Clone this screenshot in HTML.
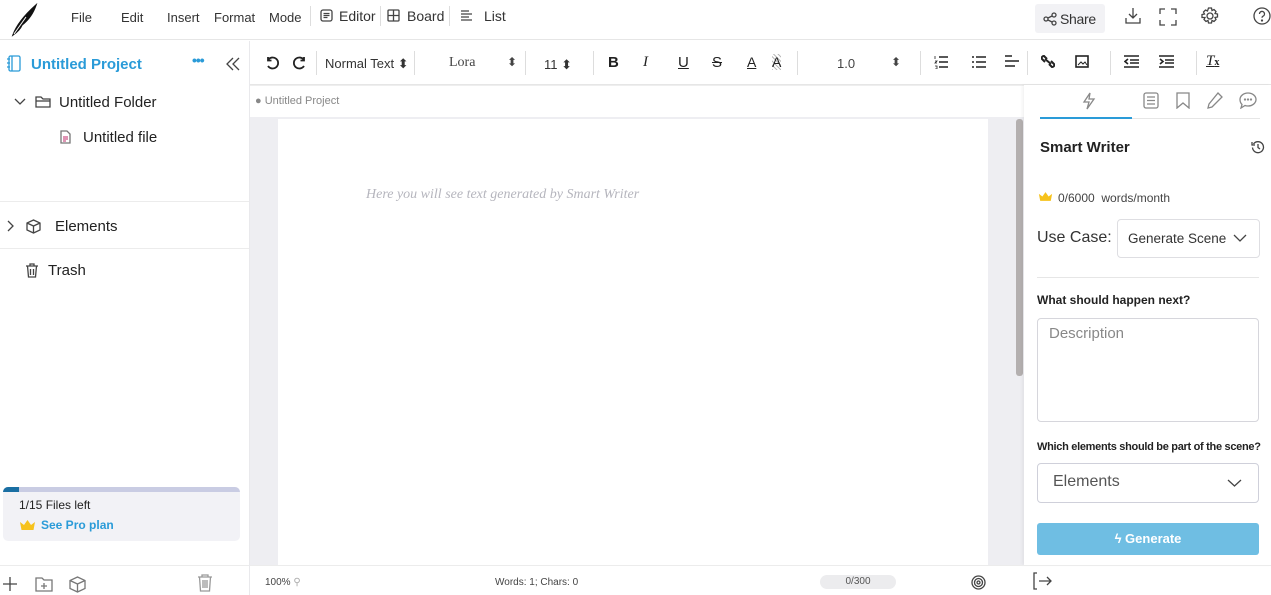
<!DOCTYPE html>
<html><head><meta charset="utf-8"><style>
*{box-sizing:border-box;margin:0;padding:0}
body{width:1271px;height:595px;overflow:hidden;background:#fff;font-family:"Liberation Sans",sans-serif;color:#222;position:relative}
.a{position:absolute}
svg{position:absolute;fill:none;stroke:#444;stroke-width:1.3}
.m{font-size:13px;color:#333;top:10px}
.tb{font-size:14px;color:#333}
</style></head><body>
<div class="a" style="left:0;top:0;width:1271px;height:40px;border-bottom:1px solid #e6e6e6"></div>
<svg style="left:10px;top:3px" width="30" height="34" viewBox="0 0 30 34"><path d="M3 32 Q8 18 26 2 Q22 14 12 22 Q10 27 3 32Z" fill="#111" stroke="#111"/><path d="M4 31 L16 14" stroke="#fff" stroke-width="1"/></svg>
<div class="a m" style="left:71px">File</div>
<div class="a m" style="left:121px">Edit</div>
<div class="a m" style="left:167px">Insert</div>
<div class="a m" style="left:214px">Format</div>
<div class="a m" style="left:269px">Mode</div>
<div class="a" style="left:310px;top:6px;width:1px;height:20px;background:#ddd"></div>
<svg style="left:320px;top:9px" width="13" height="13" viewBox="0 0 13 13"><rect x="1" y="1" width="11" height="11" rx="2"/><path d="M3.5 4.5h6M3.5 6.5h6M3.5 8.5h4"/></svg>
<div class="a tb" style="left:339px;top:8px">Editor</div>
<div class="a" style="left:380px;top:6px;width:1px;height:20px;background:#ddd"></div>
<svg style="left:387px;top:9px" width="13" height="13" viewBox="0 0 13 13"><rect x="1" y="1" width="11" height="11" rx="1"/><path d="M6.5 1v11M1 6.5h11"/></svg>
<div class="a tb" style="left:407px;top:8px">Board</div>
<div class="a" style="left:449px;top:6px;width:1px;height:20px;background:#ddd"></div>
<svg style="left:460px;top:10px" width="13" height="11" viewBox="0 0 13 11"><path d="M1 1h8M1 4h11M1 7h8M1 10h11"/></svg>
<div class="a tb" style="left:484px;top:8px">List</div>
<div class="a" style="left:1035px;top:4px;width:70px;height:29px;background:#f2f2f5;border-radius:3px"></div>
<svg style="left:1043px;top:12px" width="14" height="14" viewBox="0 0 14 14"><circle cx="3" cy="7" r="2"/><circle cx="11" cy="3" r="2"/><circle cx="11" cy="11" r="2"/><path d="M5 6l4-2M5 8l4 2"/></svg>
<div class="a" style="left:1060px;top:11px;font-size:14px;color:#333;letter-spacing:-0.3px">Share</div>
<svg style="left:1124px;top:7px" width="18" height="18" viewBox="0 0 18 18"><path d="M9 1v10M5 7l4 4 4-4M2 11v5h14v-5"/></svg>
<svg style="left:1159px;top:8px" width="18" height="18" viewBox="0 0 18 18"><path d="M1 6V1h5M12 1h5v5M17 12v5h-5M6 17H1v-5"/></svg>
<svg style="left:1201px;top:7px" width="18" height="18" viewBox="0 0 18 18"><circle cx="9" cy="9" r="3"/><path d="M7.5 1h3l.5 2.5 2-1 2 2-1 2 2.5.5v3l-2.5.5 1 2-2 2-2-1-.5 2.5h-3l-.5-2.5-2 1-2-2 1-2L1 10.5v-3L3.5 7l-1-2 2-2 2 1z"/></svg>
<svg style="left:1253px;top:7px" width="18" height="18" viewBox="0 0 18 18"><circle cx="9" cy="9" r="8"/><path d="M6.5 7a2.5 2.5 0 1 1 3.5 2.2c-.7.4-1 .8-1 1.6"/><circle cx="9" cy="13.5" r=".5" fill="#444"/></svg>

<div class="a" style="left:249px;top:41px;width:1px;height:554px;background:#e9e9ec"></div>
<svg style="left:7px;top:55px;stroke:#2a9bd8" width="14" height="17" viewBox="0 0 14 17"><rect x="2" y="1" width="11" height="15" rx="1.5"/><path d="M5 1v15M0 4h3M0 8h3M0 12h3"/></svg>
<div class="a" style="left:31px;top:56px;font-size:15px;font-weight:bold;color:#2a9bd8">Untitled Project</div>
<div class="a" style="left:192px;top:52px;font-size:14px;font-weight:bold;color:#2a9bd8;letter-spacing:-1px">•••</div>
<svg style="left:225px;top:57px" width="16" height="14" viewBox="0 0 16 14"><path d="M8 1L2 7l6 6M14 1L8 7l6 6"/></svg>
<svg style="left:14px;top:98px" width="12" height="8" viewBox="0 0 12 8"><path d="M1 1l5 5 5-5"/></svg>
<svg style="left:35px;top:95px" width="16" height="13" viewBox="0 0 16 13"><path d="M1 2h5l2 2h7v8H1z"/><path d="M1 6h14"/></svg>
<div class="a" style="left:59px;top:94px;font-size:15px;color:#222">Untitled Folder</div>
<svg style="left:60px;top:130px;stroke:#777" width="11" height="14" viewBox="0 0 11 14"><path d="M1 1h6l3 3v9H1z"/><path d="M3 7h5M3 9h5M3 11h3" stroke="#c58"/></svg>
<div class="a" style="left:83px;top:129px;font-size:15px;color:#222">Untitled file</div>
<div class="a" style="left:0;top:201px;width:249px;height:1px;background:#ececec"></div>
<div class="a" style="left:0;top:248px;width:249px;height:1px;background:#ececec"></div>
<svg style="left:7px;top:220px" width="7" height="12" viewBox="0 0 7 12"><path d="M1 1l5 5-5 5"/></svg>
<svg style="left:26px;top:219px" width="15" height="15" viewBox="0 0 15 15"><path d="M7.5 1L14 4v7l-6.5 3L1 11V4zM1 4l6.5 3L14 4M7.5 7v7"/></svg>
<div class="a" style="left:55px;top:218px;font-size:15px;color:#222">Elements</div>
<svg style="left:25px;top:263px" width="14" height="15" viewBox="0 0 14 15"><path d="M1 3h12M5 3V1h4v2M2.5 3l1 11h7l1-11M5.5 6v6M8.5 6v6"/></svg>
<div class="a" style="left:48px;top:262px;font-size:15px;color:#222">Trash</div>
<div class="a" style="left:3px;top:487px;width:237px;height:54px;background:#f2f2f6;border-radius:5px;overflow:hidden">
<div style="height:5px;background:#c9cce3"><div style="width:16px;height:5px;background:#1a6fa3"></div></div></div>
<div class="a" style="left:19px;top:498px;font-size:12px;color:#222">1/15 Files left</div>
<svg style="left:19px;top:519px;stroke:none" width="17" height="12" viewBox="0 0 17 12"><path d="M1 3l4 3 3.5-5 3.5 5 4-3-1.5 8h-12z" fill="#f6c21c"/></svg>
<div class="a" style="left:41px;top:518px;font-size:12px;font-weight:bold;color:#2a9bd8">See Pro plan</div>
<div class="a" style="left:0;top:565px;width:249px;height:1px;background:#ececec"></div>
<svg style="left:2px;top:576px" width="16" height="16" viewBox="0 0 16 16"><path d="M8 1v14M1 8h14"/></svg>
<svg style="left:35px;top:576px;stroke:#777" width="18" height="16" viewBox="0 0 18 16"><path d="M1 2h6l2 2h8v11H1z M9 7v6M6 10h6"/></svg>
<svg style="left:69px;top:576px;stroke:#777" width="17" height="17" viewBox="0 0 17 17"><path d="M8.5 1L16 4.5v8L8.5 16 1 12.5v-8zM1 4.5l7.5 3.5L16 4.5M8.5 8v8"/></svg>
<svg style="left:197px;top:574px;stroke:#999" width="16" height="18" viewBox="0 0 16 18"><path d="M1 3h14M5 3V1h6v2M2.5 3l1 14h9l1-14M6 6v8M8 6v8M10 6v8"/></svg>

<div class="a" style="left:250px;top:84px;width:1021px;height:1px;background:#e6e6e6"></div>
<svg style="left:265px;top:56px;stroke:#222;stroke-width:1.8" width="15" height="14" viewBox="0 0 15 14"><path d="M3 4a5.5 5.5 0 1 1 0 6M3 1v3.5h3.5"/></svg>
<svg style="left:292px;top:56px;stroke:#222;stroke-width:1.8" width="15" height="14" viewBox="0 0 15 14"><path d="M12 4a5.5 5.5 0 1 0 0 6M12 1v3.5H8.5"/></svg>
<div class="a" style="left:316px;top:51px;width:1px;height:24px;background:#ddd"></div>
<div class="a" style="left:325px;top:56px;font-size:13px;color:#333">Normal Text ⬍</div>
<div class="a" style="left:414px;top:51px;width:1px;height:24px;background:#ddd"></div>
<div class="a" style="left:449px;top:55px;font-size:14px;color:#444;font-family:'Liberation Serif',serif">Lora</div>
<div class="a" style="left:507px;top:55px;font-size:12px;color:#444">⬍</div>
<div class="a" style="left:525px;top:51px;width:1px;height:24px;background:#ddd"></div>
<div class="a" style="left:544px;top:57px;font-size:13px;color:#333">11 ⬍</div>
<div class="a" style="left:593px;top:51px;width:1px;height:24px;background:#ddd"></div>
<div class="a" style="left:608px;top:54px;font-size:15px;font-weight:bold;color:#222">B</div>
<div class="a" style="left:643px;top:54px;font-size:15px;font-style:italic;font-family:'Liberation Serif',serif;color:#222">I</div>
<div class="a" style="left:678px;top:54px;font-size:15px;text-decoration:underline;color:#222">U</div>
<div class="a" style="left:712px;top:54px;font-size:15px;text-decoration:line-through;color:#222">S</div>
<div class="a" style="left:747px;top:54px;font-size:14px;text-decoration:underline;color:#222">A</div>
<div class="a" style="left:772px;top:54px;font-size:14px;color:#222;background:repeating-linear-gradient(45deg,#bbb 0 1px,#fff 1px 3px)">A</div>
<div class="a" style="left:797px;top:51px;width:1px;height:24px;background:#ddd"></div>
<div class="a" style="left:837px;top:56px;font-size:13px;color:#444">1.0</div>
<div class="a" style="left:891px;top:55px;font-size:12px;color:#444">⬍</div>
<div class="a" style="left:920px;top:51px;width:1px;height:24px;background:#ddd"></div>
<svg style="left:934px;top:55px;stroke:#222;stroke-width:1.6" width="14" height="14" viewBox="0 0 14 14"><path d="M5 2h9M5 7h9M5 12h9"/><path d="M1 1v3M1 6h2l-2 2h2M1 11h2v3H1" stroke-width="0.8"/></svg>
<svg style="left:972px;top:55px;stroke:#222;stroke-width:1.6" width="14" height="14" viewBox="0 0 14 14"><path d="M4 2h10M4 7h10M4 12h10M0 2h2M0 7h2M0 12h2"/></svg>
<svg style="left:1005px;top:54px;stroke:#222;stroke-width:1.6" width="15" height="15" viewBox="0 0 15 15"><path d="M0 2h7M0 7h14M0 12h10"/></svg>
<div class="a" style="left:1027px;top:51px;width:1px;height:24px;background:#ddd"></div>
<svg style="left:1041px;top:54px;stroke:#222;stroke-width:2" width="14" height="15" viewBox="0 0 14 15"><path d="M6 5L3 2a2 2 0 0 0-2 3l3 3M8 10l3 3a2 2 0 0 0 2-3l-3-3M4 5l6 5"/></svg>
<svg style="left:1075px;top:55px;stroke:#222;stroke-width:1.6" width="14" height="13" viewBox="0 0 14 13"><rect x="1" y="1" width="12" height="11"/><path d="M3 10l3-3 2 2 2-2 2 3" stroke-width="1"/></svg>
<div class="a" style="left:1110px;top:51px;width:1px;height:24px;background:#ddd"></div>
<svg style="left:1124px;top:55px;stroke:#222;stroke-width:1.6" width="15" height="13" viewBox="0 0 15 13"><path d="M0 1h15M6 5h9M6 8h9M0 12h15M4 4L1 6.5 4 9"/></svg>
<svg style="left:1159px;top:55px;stroke:#222;stroke-width:1.6" width="15" height="13" viewBox="0 0 15 13"><path d="M0 1h15M6 5h9M6 8h9M0 12h15M1 4l3 2.5L1 9"/></svg>
<div class="a" style="left:1196px;top:51px;width:1px;height:24px;background:#ddd"></div>
<div class="a" style="left:1206px;top:53px;font-size:15px;font-style:italic;text-decoration:underline;color:#222;font-family:'Liberation Serif',serif">T<span style="font-size:10px;font-weight:bold;font-style:normal">x</span></div>

<div class="a" style="left:250px;top:85px;width:774px;height:1px;background:#eee"></div>
<div class="a" style="left:255px;top:95px;font-size:11px;color:#888">● Untitled Project</div>
<div class="a" style="left:250px;top:117px;width:774px;height:448px;background:#eeeef2"></div>
<div class="a" style="left:278px;top:119px;width:710px;height:446px;background:#fff"></div>
<div class="a" style="left:1016px;top:119px;width:7px;height:257px;background:#b4b0b0;border-radius:3px"></div>
<div class="a" style="left:366px;top:187px;font-size:14px;font-style:italic;color:#b5b5bd;font-family:'Liberation Serif',serif">Here you will see text generated by Smart Writer</div>

<div class="a" style="left:1024px;top:85px;width:247px;height:480px;background:#fff;box-shadow:-2px 0 3px rgba(0,0,0,.05)"></div>
<svg style="left:1082px;top:92px;stroke:#888" width="14" height="18" viewBox="0 0 14 18"><path d="M8 1L2 10h5l-2 7 7-10H7z"/></svg>
<div class="a" style="left:1040px;top:117px;width:92px;height:2px;background:#2a9bd8"></div>
<div class="a" style="left:1132px;top:118px;width:128px;height:1px;background:#e6e6e6"></div>
<svg style="left:1143px;top:92px;stroke:#888" width="16" height="17" viewBox="0 0 16 17"><rect x="1" y="1" width="14" height="15" rx="2"/><path d="M4 5h8M4 8.5h8M4 12h8"/></svg>
<svg style="left:1176px;top:92px;stroke:#888" width="14" height="17" viewBox="0 0 14 17"><path d="M1 1h12v15l-6-5-6 5z"/></svg>
<svg style="left:1207px;top:92px;stroke:#888" width="16" height="17" viewBox="0 0 16 17"><path d="M11 1l4 4L5 15l-4 1 1-4z"/></svg>
<svg style="left:1239px;top:92px;stroke:#888" width="18" height="17" viewBox="0 0 18 17"><path d="M9 1c4.5 0 8 3 8 6.5S13.5 14 9 14c-1 0-2 0-3-.5L2 16l1-3.5C1.5 11 1 9.5 1 7.5 1 4 4.5 1 9 1z"/><circle cx="6" cy="7.5" r=".5"/><circle cx="9" cy="7.5" r=".5"/><circle cx="12" cy="7.5" r=".5"/></svg>
<div class="a" style="left:1040px;top:139px;font-size:15px;font-weight:bold;color:#222">Smart Writer</div>
<svg style="left:1251px;top:140px" width="14" height="14" viewBox="0 0 14 14"><path d="M2.5 4A5.5 5.5 0 1 1 1.5 7.5M1 2v3h3M7 4v3.5l2 1.5"/></svg>
<svg style="left:1038px;top:191px;stroke:none" width="15" height="11" viewBox="0 0 17 12"><path d="M1 3l4 3 3.5-5 3.5 5 4-3-1.5 8h-12z" fill="#f6c21c"/></svg>
<div class="a" style="left:1058px;top:191px;font-size:12px;color:#444">0/6000 &nbsp;words/month</div>
<div class="a" style="left:1037px;top:229px;font-size:16px;color:#333">Use Case:</div>
<div class="a" style="left:1117px;top:219px;width:143px;height:39px;border:1px solid #dedee2;border-radius:4px"></div>
<div class="a" style="left:1128px;top:231px;font-size:13.5px;color:#333">Generate Scene</div>
<svg style="left:1233px;top:234px" width="14" height="8" viewBox="0 0 14 8"><path d="M1 1l6 6 6-6"/></svg>
<div class="a" style="left:1037px;top:277px;width:222px;height:1px;background:#e6e6e6"></div>
<div class="a" style="left:1037px;top:293px;font-size:12px;font-weight:bold;color:#222">What should happen next?</div>
<div class="a" style="left:1037px;top:318px;width:222px;height:104px;border:1px solid #d6d6dc;border-radius:4px"></div>
<div class="a" style="left:1049px;top:325px;font-size:15px;color:#888">Description</div>
<div class="a" style="left:1037px;top:441px;font-size:11px;font-weight:bold;color:#222;white-space:nowrap;letter-spacing:-0.3px">Which elements should be part of the scene?</div>
<div class="a" style="left:1037px;top:463px;width:222px;height:40px;border:1px solid #cfd0da;border-radius:4px"></div>
<div class="a" style="left:1053px;top:473px;font-size:16px;color:#555">Elements</div>
<svg style="left:1227px;top:479px" width="15" height="8" viewBox="0 0 15 8"><path d="M1 1l6.5 6 6.5-6"/></svg>
<div class="a" style="left:1037px;top:523px;width:222px;height:32px;background:#6fbee3;border-radius:3px;color:#fff;font-size:13px;font-weight:bold;text-align:center;line-height:32px">ϟ Generate</div>

<div class="a" style="left:250px;top:565px;width:1021px;height:1px;background:#ececec"></div>
<div class="a" style="left:265px;top:577px;font-size:10px;color:#444">100% <span style="color:#aaa">⚲</span></div>
<div class="a" style="left:495px;top:577px;font-size:10px;color:#444">Words: 1; Chars: 0</div>
<div class="a" style="left:820px;top:575px;width:76px;height:14px;background:#ececee;border-radius:7px;font-size:10px;color:#555;text-align:center;line-height:14px">0/300</div>
<svg style="left:971px;top:575px" width="15" height="15" viewBox="0 0 15 15"><circle cx="7.5" cy="7.5" r="6.5"/><circle cx="7.5" cy="7.5" r="4"/><circle cx="7.5" cy="7.5" r="1.5"/></svg>
<svg style="left:1032px;top:572px" width="20" height="18" viewBox="0 0 20 18"><path d="M5 1H2v16h3M7 9h12M15 5l4 4-4 4"/></svg>
</body></html>
